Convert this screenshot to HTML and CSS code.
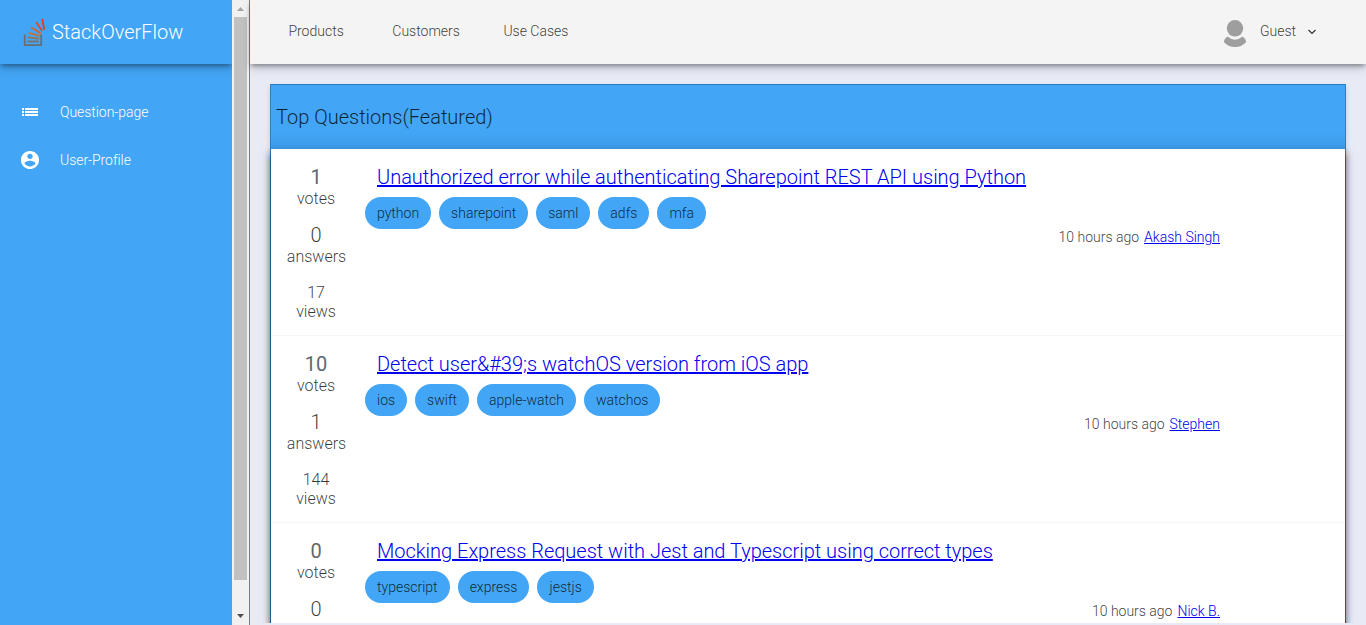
FILE: index.html
```
<!DOCTYPE html>
<html lang="en">
<head>
<meta charset="utf-8">
<title>StackOverFlow</title>
<link rel="stylesheet" href="styles.css">
</head>
<body>
<div class="app">
  <aside class="drawer">
    <div class="side">
      <div class="brand">
        <svg class="logo" width="24" height="30" viewBox="0 0 24 30" fill="none">
          <path d="M2.700 17.500v10.700h16.500v-10.700" stroke="#6b6c70" stroke-width="1.700"/>
          <path d="M5.500 24.500h11.500" stroke="#75706b" stroke-width="1.800"/>
          <path d="M5.700 20.400l11.300 1.200" stroke="#9a7450" stroke-width="1.800"/>
          <path d="M6.500 15.800l10.800 3.100" stroke="#c07335" stroke-width="1.800"/>
          <path d="M9.200 10.600l9.500 5.700" stroke="#df5f24" stroke-width="1.800"/>
          <path d="M14.200 5.300l6 8.700" stroke="#e94622" stroke-width="1.800"/>
          <path d="M20.200 1.800l2 10.800" stroke="#ee3424" stroke-width="1.800"/>
        </svg>
        <span class="brand-name">StackOverFlow</span>
      </div>
      <nav class="side-nav">
        <a class="side-link"><svg class="side-icon" viewBox="0 0 20 20"><path fill="#fff" d="M2 6h2v2H2zM2 9h2v2H2zM2 12h2v2H2zM5 6h13v2H5zM5 9h13v2H5zM5 12h13v2H5z"/></svg><span>Question-page</span></a>
        <a class="side-link"><svg class="side-icon" viewBox="1 1 22 22"><path fill="#fff" d="M12 2C6.480 2 2 6.480 2 12s4.480 10 10 10 10-4.480 10-10S17.520 2 12 2zm0 3c1.660 0 3 1.340 3 3s-1.340 3-3 3-3-1.340-3-3 1.340-3 3-3zm0 14.200c-2.500 0-4.710-1.280-6-3.220.03-1.990 4-3.080 6-3.080 1.990 0 5.970 1.090 6 3.080-1.290 1.940-3.500 3.220-6 3.220z"/></svg><span>User-Profile</span></a>
      </nav>
    </div>
    <div class="scrollbar">
      <svg width="17" height="17"><path fill="#a3a3a3" d="M5 11h7L8.500 7z"/></svg>
      <div class="thumb"></div>
      <svg width="17" height="17"><path fill="#505050" d="M5 6h7L8.500 10z"/></svg>
    </div>
  </aside>
  <div class="main">
    <header class="topbar">
      <a class="top-link products">Products</a>
      <a class="top-link customers">Customers</a>
      <a class="top-link">Use Cases</a>
      <div class="user">
        <svg width="24" height="28" viewBox="0 0 24 28"><ellipse cx="12" cy="8.300" rx="8.200" ry="8.300" fill="#9e9e9e"/><path fill="#9e9e9e" d="M4.500 16.500Q12 23 19.500 16.500Q22.300 18.300 23.300 21.700Q19 27 12 27Q5 27 .7 21.700Q1.700 18.300 4.500 16.500z"/></svg>
        <span class="guest">Guest</span>
        <svg class="chevron" width="10" height="8" viewBox="0 0 10 8"><path d="M1.500 2l3.500 3.500L8.500 2" fill="none" stroke="#333" stroke-width="1.200"/></svg>
      </div>
    </header>
    <div class="page">
      <section class="card">
        <h2 class="card-head">Top Questions(Featured)</h2>
        <div class="list">
          <article class="row">
            <div class="stats">
              <div class="stat"><b class="num votes">1</b><span>votes</span></div>
              <div class="stat"><span class="num">0</span><span class="answers">answers</span></div>
              <div class="stat views"><span>17</span><span>views</span></div>
            </div>
            <div class="body">
              <a class="title" href="#">Unauthorized error while authenticating Sharepoint REST API using Python</a>
              <div class="tags"><span class="tag">python</span><span class="tag">sharepoint</span><span class="tag">saml</span><span class="tag">adfs</span><span class="tag">mfa</span></div>
              <div class="meta"><span>10 hours ago</span><a href="#">Akash Singh</a></div>
            </div>
          </article>
          <article class="row">
            <div class="stats">
              <div class="stat"><b class="num votes">10</b><span>votes</span></div>
              <div class="stat"><span class="num">1</span><span class="answers">answers</span></div>
              <div class="stat views"><span>144</span><span>views</span></div>
            </div>
            <div class="body">
              <a class="title" href="#">Detect user&amp;#39;s watchOS version from iOS app</a>
              <div class="tags"><span class="tag">ios</span><span class="tag">swift</span><span class="tag">apple-watch</span><span class="tag">watchos</span></div>
              <div class="meta"><span>10 hours ago</span><a href="#">Stephen</a></div>
            </div>
          </article>
          <article class="row">
            <div class="stats">
              <div class="stat"><b class="num votes">0</b><span>votes</span></div>
              <div class="stat"><span class="num">0</span></div>
            </div>
            <div class="body">
              <a class="title" href="#">Mocking Express Request with Jest and Typescript using correct types</a>
              <div class="tags"><span class="tag">typescript</span><span class="tag">express</span><span class="tag">jestjs</span></div>
              <div class="meta"><span>10 hours ago</span><a href="#">Nick B.</a></div>
            </div>
          </article>
        </div>
      </section>
    </div>
  </div>
</div>
</body>
</html>
```
FILE: styles.css
```
* { box-sizing: border-box; }
body { margin: 0; font-family: Roboto, "Liberation Sans", sans-serif; font-weight: 300; color: rgba(0,0,0,.78); overflow: hidden; }
.app { display: flex; height: 625px; background: #e8eaf6; }
.drawer { display: flex; width: 250px; flex: none; border-right: 1px solid #3d8fd5; }
.side { width: 232px; background: #42a5f5; color: #fff; overflow: hidden; }
.brand { display: flex; align-items: center; height: 64px; padding-left: 22px; box-shadow: 0 3px 5px -1px rgba(0,0,0,.4), 0 6px 10px rgba(0,0,0,.1); }
.logo { margin-right: 6px; }
.brand-name { font-size: 20px; line-height: 24px; }
.side-nav { padding-top: 24px; }
.side-link { display: flex; align-items: center; height: 48px; padding-left: 20px; gap: 20px; font-size: 14px; font-weight: 350; letter-spacing: -.05px; }
.side-icon { width: 20px; height: 20px; }
.scrollbar { display: flex; flex-direction: column; width: 17px; background: #f1f1f1; }
.scrollbar svg { flex: none; }
.thumb { height: 563px; margin: 0 2px auto; background: #c1c1c1; }
.main { flex: 1; min-width: 0; display: flex; flex-direction: column; }
.topbar { display: flex; align-items: center; height: 64px; flex: none; padding: 0 49px 2px 38.4px; background: #f4f4f4; font-size: 14px; box-shadow: 0 3px 5px -1px rgba(0,0,0,.4), 0 6px 10px rgba(0,0,0,.1); position: relative; }
.products { margin-right: 48.6px; }
.customers { margin-right: 43.5px; }
.user { display: flex; align-items: center; margin-left: auto; }
.user > svg:first-child { margin-top: 5px; }
.guest { margin: 0 11px 0 13px; }
.chevron { margin-top: 2px; }
.page { flex: 1; min-height: 0; margin-bottom: 2px; padding: 20px 20px 0; overflow: hidden; }
.card { height: 600px; border: 1px solid #2d7cbd; box-shadow: 0 3px 5px rgba(0,0,0,.15); }
.card-head { display: flex; align-items: center; height: 64px; margin: 0; padding-left: 5px; background: linear-gradient(#42a5f5 75%, #3d9beb); font-size: 20px; font-weight: 300; }
.list { background: #fff; box-shadow: 0 5px 8px 1px rgba(0,0,0,.5); }
.row { display: flex; height: 187px; padding-top: 17px; border-bottom: 1px solid #f7f7f7; }
.stats { display: flex; flex-direction: column; gap: 15px; width: 90px; text-align: center; font-size: 16px; line-height: 20px; }
.stat { display: flex; flex-direction: column; }
.num { font-size: 20px; line-height: 22px; padding-bottom: 1px; }
.votes { font-weight: 400; color: #5f6770; }
.answers { padding-left: 1px; }
.views { margin-top: 1px; line-height: 19px; }
.body { flex: 1; padding-right: 125px; }
.title { display: block; width: fit-content; margin-left: 16px; font-size: 20px; line-height: 22px; letter-spacing: -.01px; }
a[href] { color: #0000ee; text-decoration: underline; }
.tags { display: flex; gap: 8px; margin: 9px 0 0 4px; }
.tag { height: 32px; padding: 0 12px; border-radius: 16px; background: #42a5f5; font-size: 14px; line-height: 32px; }
.meta { display: flex; justify-content: flex-end; gap: 5px; font-size: 14px; line-height: 16px; }
```
